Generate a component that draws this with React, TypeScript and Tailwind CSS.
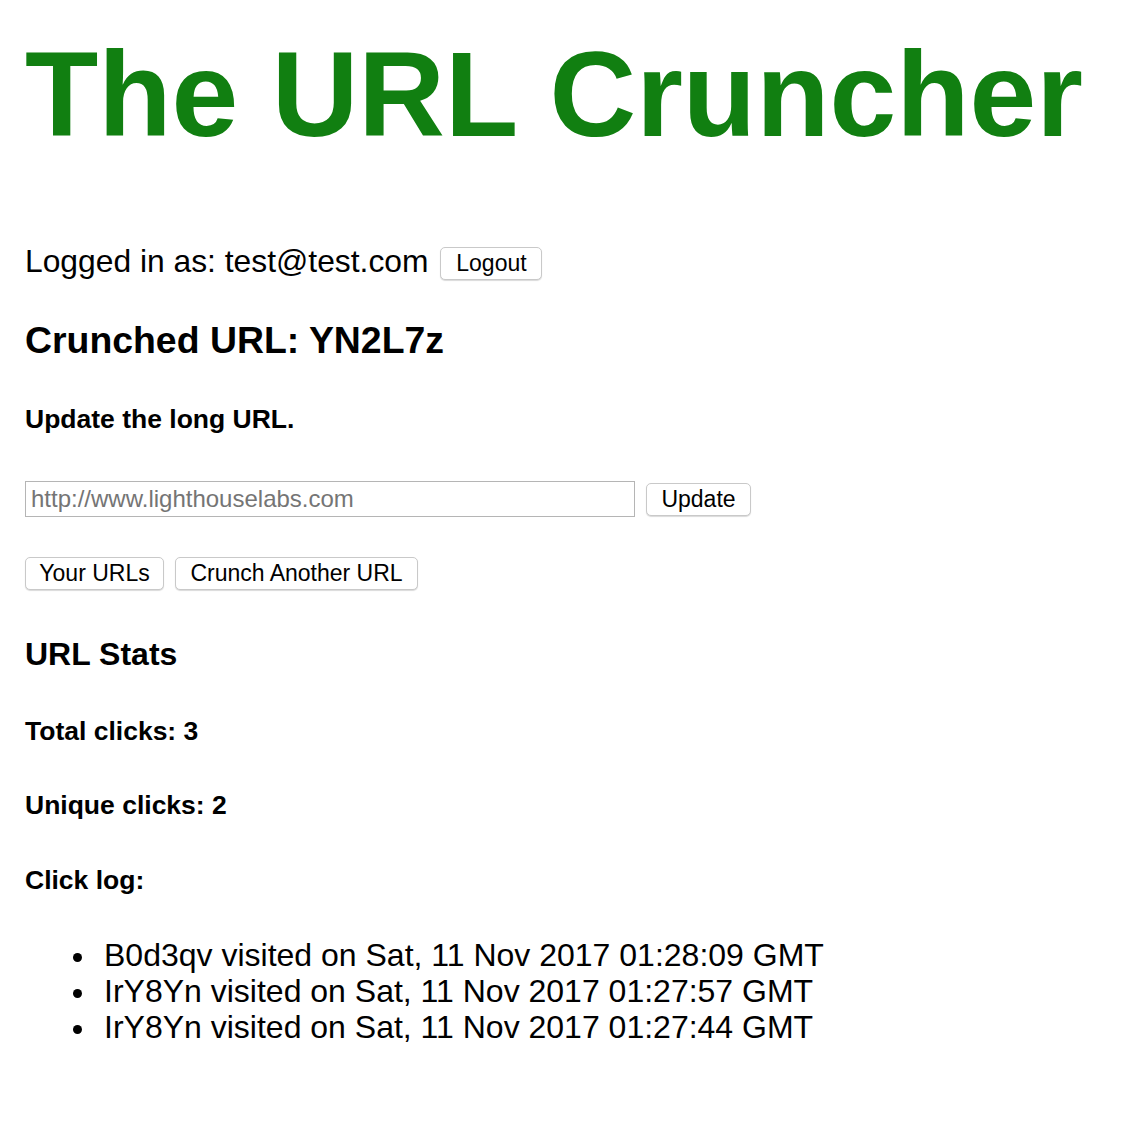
import React from "react";

const btn =
  "h-[33px] rounded-[5px] border border-[#c9c9c9] bg-white text-[23px] leading-none text-black shadow-[0_1px_1px_rgba(0,0,0,0.15)]";

export default function App() {
  const log = [
    "B0d3qv visited on Sat, 11 Nov 2017 01:28:09 GMT",
    "IrY8Yn visited on Sat, 11 Nov 2017 01:27:57 GMT",
    "IrY8Yn visited on Sat, 11 Nov 2017 01:27:44 GMT",
  ];
  return (
    <div
      className="min-h-[1128px] w-full bg-white pl-[25px] pt-[34px] text-black"
      style={{ fontFamily: '"Liberation Sans", Arial, Helvetica, sans-serif' }}
    >
      <h1 className="text-[120px] font-bold leading-none text-[#117f11]">
        The URL Cruncher
      </h1>

      <div className="mt-[92px] flex items-start">
        <span className="text-[31.8px] leading-none">Logged in as: test@test.com</span>
        <button className={`${btn} ml-[12px] mt-[1px] w-[102px]`}>Logout</button>
      </div>

      <h2 className="mt-[42px] text-[37.4px] font-bold leading-none">Crunched URL: YN2L7z</h2>

      <h3 className="mt-[47px] text-[26.5px] font-bold leading-none">Update the long URL.</h3>

      <div className="mt-[48px] flex items-start">
        <input
          readOnly
          placeholder="http://www.lighthouselabs.com"
          className="h-[36px] w-[610px] border border-[#b5b5b5] px-[5px] text-[24px] leading-none text-[#757575] placeholder:text-[#757575] outline-none"
        />
        <button className={`${btn} ml-[11px] mt-[2px] w-[105px]`}>Update</button>
      </div>

      <div className="mt-[40px] flex items-start gap-[11px]">
        <button className={`${btn} w-[139px]`}>Your URLs</button>
        <button className={`${btn} w-[243px]`}>Crunch Another URL</button>
      </div>

      <h3 className="mt-[48px] text-[32px] font-bold leading-none">URL Stats</h3>

      <h4 className="mt-[48px] text-[26.5px] font-bold leading-none">Total clicks: 3</h4>
      <h4 className="mt-[48px] text-[26.5px] font-bold leading-none">Unique clicks: 2</h4>
      <h4 className="mt-[48px] text-[26.5px] font-bold leading-none">Click log:</h4>

      <ul className="mt-[44px] pl-[48px] text-[32px] leading-[36px]">
        {log.map((l, i) => (
          <li key={i} className="flex items-center">
            <span className="w-[31px] shrink-0">
              <span className="mt-[4px] block h-[9px] w-[9px] rounded-full bg-black" />
            </span>
            <span>{l}</span>
          </li>
        ))}
      </ul>
    </div>
  );
}
